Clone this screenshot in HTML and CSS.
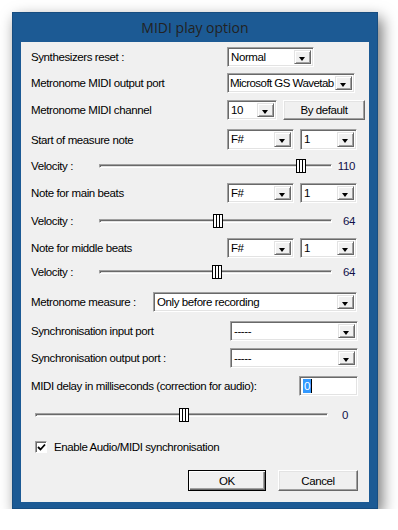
FILE: index.html
```html
<!DOCTYPE html>
<html lang="en">

<head>
  <meta charset="UTF-8" />
  <title>MIDI play option</title>
  <link rel="stylesheet" href="styles.css">
</head>

<body>
  <div class="dialog">
    <div class="titlebar">MIDI play option</div>

    <div class="client">
      <div class="row r-synth">
        <span class="label">Synthesizers reset :</span>
        <div class="combo w-normal"><span class="combo-text">Normal</span><span class="drop"></span></div>
      </div>

      <div class="row r-port">
        <span class="label">Metronome MIDI output port</span>
        <div class="combo w-port"><span class="combo-text tight">Microsoft GS Wavetab</span><span class="drop"></span></div>
      </div>

      <div class="row r-channel">
        <span class="label">Metronome MIDI channel</span>
        <div class="combo w-channel"><span class="combo-text">10</span><span class="drop"></span></div>
        <button class="btn btn-default">By default</button>
      </div>

      <div class="row r-start">
        <span class="label">Start of measure note</span>
        <div class="combo w-note"><span class="combo-text">F#</span><span class="drop"></span></div>
        <div class="combo w-oct"><span class="combo-text">1</span><span class="drop"></span></div>
      </div>

      <div class="row vel r-vel1">
        <span class="label-vel">Velocity :</span>
        <div class="slider">
          <div class="track"></div>
          <div class="thumb" style="left: 197px"></div>
        </div>
        <span class="value">110</span>
      </div>

      <div class="row r-main">
        <span class="label">Note for main beats</span>
        <div class="combo w-note"><span class="combo-text">F#</span><span class="drop"></span></div>
        <div class="combo w-oct"><span class="combo-text">1</span><span class="drop"></span></div>
      </div>

      <div class="row vel r-vel2">
        <span class="label-vel">Velocity :</span>
        <div class="slider">
          <div class="track"></div>
          <div class="thumb" style="left: 114px"></div>
        </div>
        <span class="value">64</span>
      </div>

      <div class="row r-middle">
        <span class="label">Note for middle beats</span>
        <div class="combo w-note"><span class="combo-text">F#</span><span class="drop"></span></div>
        <div class="combo w-oct"><span class="combo-text">1</span><span class="drop"></span></div>
      </div>

      <div class="row vel r-vel3">
        <span class="label-vel">Velocity :</span>
        <div class="slider">
          <div class="track"></div>
          <div class="thumb" style="left: 113px"></div>
        </div>
        <span class="value">64</span>
      </div>

      <div class="row r-measure">
        <span class="label label-measure">Metronome measure :</span>
        <div class="combo w-measure"><span class="combo-text">Only before recording</span><span class="drop"></span></div>
      </div>

      <div class="row r-sync-in">
        <span class="label label-sync">Synchronisation input port</span>
        <div class="combo w-sync"><span class="combo-text">-----</span><span class="drop"></span></div>
      </div>

      <div class="row r-sync-out">
        <span class="label label-sync">Synchronisation output port :</span>
        <div class="combo w-sync"><span class="combo-text">-----</span><span class="drop"></span></div>
      </div>

      <div class="row r-delay">
        <span class="label label-delay">MIDI delay in milliseconds (correction for audio):</span>
        <div class="textbox"><span class="selected">0</span><span class="caret"></span></div>
      </div>

      <div class="row r-delay-slider">
        <div class="slider slider-wide">
          <div class="track"></div>
          <div class="thumb" style="left: 144px"></div>
        </div>
        <span class="value value-zero">0</span>
      </div>

      <div class="row r-check">
        <span class="checkbox">
          <svg width="9" height="9" viewBox="0 0 9 9">
            <path d="M1 4 L3.5 6.5 L8 1.5" fill="none" stroke="#000" stroke-width="1.8" />
          </svg>
        </span>
        <span class="check-label">Enable Audio/MIDI synchronisation</span>
      </div>

      <div class="row r-buttons">
        <button class="btn btn-ok">OK</button>
        <button class="btn btn-cancel">Cancel</button>
      </div>
    </div>
  </div>
</body>

</html>
```

FILE: styles.css
```css
/* Windows 8 style dialog */

body {
  margin: 0;
  background: #ffffff;
  font-family: 'Liberation Sans', Arial, sans-serif;
  font-size: 11.5px;
  letter-spacing: -0.4px;
  color: #000000;
}

.dialog {
  margin: 12px 0 0 12px;
  width: 366px;
  height: 497px;
  box-sizing: border-box;
  padding: 0 8px 7px;
  background: #1c5a94;
  border: 1px solid #174d80;
  box-shadow: 4px 6px 14px rgba(0, 0, 0, 0.55);
}

.titlebar {
  height: 29px;
  line-height: 29px;
  text-align: center;
  font-family: 'Open Sans', 'Noto Sans', sans-serif;
  font-size: 14px;
  letter-spacing: 0;
  color: #222222;
}

.client {
  height: 460px;
  background: #f0f0f0;
  padding-top: 5px;
  box-sizing: border-box;
  overflow: hidden;
}

/* rows */

.row {
  display: flex;
  align-items: center;
  height: 20px;
  padding-left: 10px;
}

.r-port { margin-top: 6px; }
.r-channel { margin-top: 7px; }
.r-start { margin-top: 9px; height: 21px; }
.r-vel1 { margin-top: 6px; }
.r-main { margin-top: 7px; }
.r-vel2 { margin-top: 8px; }
.r-middle { margin-top: 7px; }
.r-vel3 { margin-top: 4px; }
.r-measure { margin-top: 10px; }
.r-sync-in { margin-top: 9px; }
.r-sync-out { margin-top: 7px; }
.r-delay { margin-top: 8px; }
.r-delay-slider { margin-top: 9px; padding-left: 14px; }
.r-check { margin-top: 12px; padding-left: 14px; }
.r-buttons { margin-top: 13px; padding-left: 167px; height: 21px; }

.label {
  width: 196px;
  flex: none;
  white-space: nowrap;
}

.label-measure { width: 122px; }
.label-sync { width: 199px; }
.label-delay { width: 268px; }

/* combobox */

.combo {
  display: flex;
  height: 100%;
  box-sizing: border-box;
  background: #ffffff;
  border: 1px solid;
  border-color: #a0a0a0 #ffffff #ffffff #a0a0a0;
  box-shadow: inset 1px 1px 0 #696969, inset -1px -1px 0 #e3e3e3;
  padding: 2px;
  flex: none;
}

.combo + .combo { margin-left: 6px; }

.combo-text {
  flex: 1;
  overflow: hidden;
  white-space: nowrap;
  line-height: 14px;
  padding-left: 1px;
}

.combo-text.tight {
  padding-left: 0;
  letter-spacing: -0.55px;
}

.drop {
  position: relative;
  width: 17px;
  flex: none;
  box-sizing: border-box;
  background: #f0f0f0;
  border: 1px solid;
  border-color: #e3e3e3 #696969 #696969 #e3e3e3;
  box-shadow: inset 1px 1px 0 #ffffff, inset -1px -1px 0 #a0a0a0;
}

.drop::after {
  content: '';
  position: absolute;
  left: 4px;
  top: 6px;
  border-left: 3.5px solid transparent;
  border-right: 3.5px solid transparent;
  border-top: 4px solid #000000;
}

.w-normal { width: 87px; }
.w-port { width: 128px; }
.w-channel { width: 50px; }
.w-note { width: 67px; }
.w-oct { width: 57px; }
.w-measure { width: 204px; }
.w-sync { width: 128px; }

/* buttons */

.btn {
  height: 20px;
  box-sizing: border-box;
  font: inherit;
  letter-spacing: inherit;
  color: #000000;
  background: #f0f0f0;
  border: 1px solid;
  border-color: #ffffff #696969 #696969 #ffffff;
  box-shadow: inset -1px -1px 0 #a0a0a0, inset 1px 1px 0 #e3e3e3;
  padding: 0;
}

.btn-default {
  width: 82px;
  margin-left: 6px;
}

.btn-ok {
  width: 78px;
  height: 21px;
  border: 1px solid #000000;
  box-shadow: inset 1px 1px 0 #ffffff, inset -1px -1px 0 #696969, inset -2px -2px 0 #a0a0a0;
}

.btn-cancel {
  width: 80px;
  height: 21px;
  margin-left: 12px;
}

/* sliders */

.label-vel {
  width: 68px;
  flex: none;
}

.slider {
  position: relative;
  width: 233px;
  height: 20px;
  flex: none;
}

.slider-wide { width: 293px; }

.track {
  position: absolute;
  left: 0;
  right: 0;
  top: 8px;
  height: 4px;
  box-sizing: border-box;
  border: 1px solid;
  border-color: #a0a0a0 #ffffff #ffffff #a0a0a0;
  background: #e3e3e3;
  box-shadow: inset 1px 1px 0 #696969;
}

.thumb {
  position: absolute;
  top: 3px;
  width: 10px;
  height: 14px;
  box-sizing: border-box;
  border: 1px solid #000000;
  background: repeating-linear-gradient(90deg, #ffffff 0 2px, #000000 2px 3px);
}

.value {
  width: 23px;
  flex: none;
  text-align: right;
  color: #10104a;
}

.value-zero {
  width: 20px;
}

/* text box */

.textbox {
  width: 59px;
  height: 20px;
  box-sizing: border-box;
  background: #ffffff;
  border: 1px solid;
  border-color: #a0a0a0 #ffffff #ffffff #a0a0a0;
  box-shadow: inset 1px 1px 0 #696969, inset -1px -1px 0 #e3e3e3;
  padding: 2px 3px;
  display: flex;
}

.selected {
  background: #3399ff;
  color: #ffffff;
  line-height: 14px;
  padding: 0 1px;
}

.caret {
  width: 1px;
  background: #000000;
}

/* checkbox */

.checkbox {
  width: 12px;
  height: 12px;
  box-sizing: border-box;
  background: #ffffff;
  border: 1px solid;
  border-color: #a0a0a0 #ffffff #ffffff #a0a0a0;
  box-shadow: inset 1px 1px 0 #696969;
  display: flex;
  align-items: center;
  justify-content: center;
  padding: 1px 0 0 1px;
}

.check-label {
  margin-left: 7px;
}
```
